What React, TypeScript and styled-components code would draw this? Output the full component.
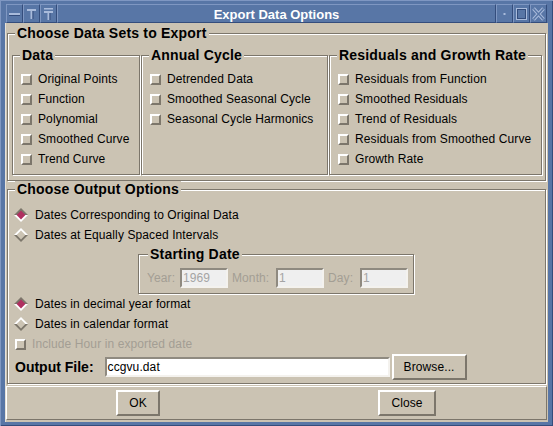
import React from "react";
import styled, { createGlobalStyle } from "styled-components";

const BG = "#cbc3b3";
const DARK = "#7c766b";
const LIGHT = "#ffffff";
const BLUE = "#5876a6";
const BLUE_LIGHT = "#7f97c2";
const BLUE_DARK = "#344d7c";
const ICON = "#a9bbdb";
const SELECT = "#b03060";
const DISABLED = "#a39e94";

const Global = createGlobalStyle`
  html, body { margin: 0; padding: 0; background: ${BLUE}; overflow: hidden; }
  * { box-sizing: border-box; }
`;

const Window = styled.div`
  width: 553px;
  height: 426px;
  background: ${BLUE};
  padding: 4px 5px 4px 5px;
  display: flex;
  flex-direction: column;
  font-family: "Liberation Sans", Arial, sans-serif;
  box-shadow: inset 1px 1px 0 ${BLUE_LIGHT}, inset -1px -1px 0 ${BLUE_DARK};
`;

const TitleBar = styled.div`
  height: 19px;
  display: flex;
  padding: 0 1px;
`;

const TitleButton = styled.div`
  width: 17px;
  flex: none;
  border-style: solid;
  border-width: 1px;
  border-color: ${BLUE_LIGHT} ${BLUE_DARK} ${BLUE_DARK} ${BLUE_LIGHT};
  display: flex;
  align-items: center;
  justify-content: center;
`;

const TitleText = styled.div`
  flex: 1;
  border-style: solid;
  border-width: 1px;
  border-color: ${BLUE_LIGHT} ${BLUE_DARK} ${BLUE_DARK} ${BLUE_LIGHT};
  color: #ffffff;
  font-weight: bold;
  font-size: 13px;
  display: flex;
  align-items: center;
  justify-content: center;
  padding-top: 1px;
`;

const Body = styled.div`
  flex: 1;
  background: ${BG};
  display: flex;
  flex-direction: column;
  padding: 2px 2px 0 2px;
  box-shadow: inset 1px 0 0 #e6e1d8;
`;

const Group = styled.fieldset<{ $pad: string; $width?: number; $ml?: number; $mt?: number }>`
  margin: ${(p) => p.$mt ?? 0}px 0 0 ${(p) => p.$ml ?? 0}px;
  min-width: 0;
  ${(p) => (p.$width ? `width: ${p.$width}px;` : "")}
  border: 1px solid ${DARK};
  box-shadow: inset 1px 1px 0 ${LIGHT}, 1px 1px 0 ${LIGHT};
  padding: ${(p) => p.$pad};
`;

const Legend = styled.legend<{ $ml?: number }>`
  font-size: 14px;
  font-weight: bold;
  line-height: 16px;
  letter-spacing: 0.2px;
  padding: 0 2px;
  margin-left: ${(p) => p.$ml ?? 3}px;
  background: ${BG};
  color: #000;
`;

const Columns = styled.div`
  display: grid;
  grid-template-columns: 128px 187px 213px;
  column-gap: 1px;
`;

const Row = styled.div<{ $indent: number; $disabled?: boolean }>`
  height: 20px;
  display: flex;
  align-items: center;
  padding-left: ${(p) => p.$indent}px;
  font-size: 12px;
  letter-spacing: 0.1px;
  color: ${(p) => (p.$disabled ? DISABLED : "#000")};
  white-space: nowrap;
`;

const Box = styled.span`
  width: 11px;
  height: 11px;
  flex: none;
  border-style: solid;
  border-width: 2px;
  border-color: ${LIGHT} ${DARK} ${DARK} ${LIGHT};
  background: ${BG};
  margin-right: 6px;
`;

const Diamond = styled.svg`
  flex: none;
  margin-right: 7px;
`;

const DateGrid = styled.div`
  display: grid;
  grid-template-columns: 37px 48px 48px 48px 36px 48px;
  align-items: center;
  height: 20px;
`;

const FieldLabel = styled.span`
  font-size: 12px;
  letter-spacing: 0.1px;
  color: ${DISABLED};
  padding-left: 4px;
`;

const Entry = styled.div<{ $width: number; $disabled?: boolean }>`
  width: ${(p) => p.$width}px;
  height: 20px;
  border-style: solid;
  border-width: 2px;
  border-color: #8f8a80 #f4f2ee #f4f2ee #8f8a80;
  background: ${(p) => (p.$disabled ? "#efefef" : "#ffffff")};
  color: ${(p) => (p.$disabled ? "#a4a4a4" : "#000")};
  font-size: 12px;
  letter-spacing: 0.1px;
  line-height: 16px;
  padding-left: 1px;
  white-space: nowrap;
  overflow: hidden;
`;

const OutputRow = styled.div`
  height: 26px;
  display: flex;
  align-items: center;
  padding-left: 3px;
`;

const BoldLabel = styled.span`
  font-size: 14px;
  font-weight: bold;
  margin-right: 11px;
`;

const Button = styled.div<{ $width: number }>`
  width: ${(p) => p.$width}px;
  height: 26px;
  border-style: solid;
  border-width: 2px;
  border-color: ${LIGHT} ${DARK} ${DARK} ${LIGHT};
  background: ${BG};
  font-size: 12px;
  letter-spacing: 0.1px;
  display: flex;
  align-items: center;
  justify-content: center;
  flex: none;
`;

const BrowseButton = styled(Button)`
  margin-left: 2px;
`;

const ButtonBar = styled.div`
  margin: 2px -1px 0 -1px;
  height: 34px;
  border-style: solid;
  border-width: 1px;
  border-color: ${LIGHT} ${DARK} ${DARK} ${LIGHT};
  display: grid;
  grid-template-columns: 262px 276px;
  align-items: center;
  justify-items: center;
`;

const Radio: React.FC<{ on?: boolean }> = ({ on }) => {
  const top = on ? DARK : LIGHT;
  const bottom = on ? LIGHT : DARK;
  return (
    <Diamond width="14" height="14" viewBox="0 0 14 14">
      <polygon points="0,7 7,0 14,7" fill={top} />
      <polygon points="0,7 7,14 14,7" fill={bottom} />
      <polygon points="2.6,7 7,2.6 11.4,7 7,11.4" fill={on ? SELECT : BG} />
    </Diamond>
  );
};

const Check: React.FC<{ label: string; indent: number; disabled?: boolean }> = ({
  label,
  indent,
  disabled,
}) => (
  <Row $indent={indent} $disabled={disabled}>
    <Box />
    {label}
  </Row>
);

const RadioRow: React.FC<{ label: string; on?: boolean }> = ({ label, on }) => (
  <Row $indent={2}>
    <Radio on={on} />
    {label}
  </Row>
);

const SubGroup: React.FC<{ title: string; items: string[] }> = ({ title, items }) => (
  <Group $pad="6px 4px 5px 4px">
    <Legend>{title}</Legend>
    {items.map((it) => (
      <Check key={it} label={it} indent={4} />
    ))}
  </Group>
);

const IconMinus = () => (
  <svg width="15" height="17" viewBox="0 0 15 17">
    <rect x="2" y="8" width="11" height="2" fill={ICON} />
    <rect x="2" y="10" width="11" height="1" fill={BLUE_DARK} />
  </svg>
);

const IconT = () => (
  <svg width="15" height="17" viewBox="0 0 15 17">
    <rect x="3" y="4" width="9" height="2" fill={ICON} />
    <rect x="6.5" y="4" width="2" height="10" fill={ICON} />
    <rect x="8.5" y="6" width="1" height="8" fill={BLUE_DARK} />
  </svg>
);

const IconTT = () => (
  <svg width="15" height="17" viewBox="0 0 15 17">
    <rect x="3" y="3" width="9" height="1.5" fill={ICON} />
    <rect x="3" y="6" width="9" height="2" fill={ICON} />
    <rect x="6.5" y="6" width="2" height="9" fill={ICON} />
    <rect x="8.5" y="8" width="1" height="7" fill={BLUE_DARK} />
  </svg>
);

const IconDot = () => (
  <svg width="15" height="17" viewBox="0 0 15 17">
    <rect x="6.5" y="8" width="2" height="2" fill={ICON} />
  </svg>
);

const IconSquare = () => (
  <svg width="15" height="17" viewBox="0 0 15 17">
    <rect x="2.5" y="3.5" width="10" height="11" fill="none" stroke={ICON} strokeWidth="1" />
    <rect x="3.5" y="4.5" width="8" height="9" fill="none" stroke={BLUE_DARK} strokeWidth="1" />
  </svg>
);

const IconX = () => (
  <svg width="15" height="17" viewBox="0 0 15 17">
    <path d="M2.5 3.5 L12.5 14.5 M12.5 3.5 L2.5 14.5" stroke={ICON} strokeWidth="3.5" />
    <path d="M2.5 3.5 L12.5 14.5 M12.5 3.5 L2.5 14.5" stroke={BLUE} strokeWidth="1.5" />
  </svg>
);

export default function App() {
  return (
    <>
      <Global />
      <Window>
        <TitleBar>
          <TitleButton>
            <IconMinus />
          </TitleButton>
          <TitleButton>
            <IconT />
          </TitleButton>
          <TitleButton>
            <IconTT />
          </TitleButton>
          <TitleText>Export Data Options</TitleText>
          <TitleButton>
            <IconDot />
          </TitleButton>
          <TitleButton>
            <IconSquare />
          </TitleButton>
          <TitleButton>
            <IconX />
          </TitleButton>
        </TitleBar>
        <Body>
          <Group $pad="6px 4px 5px 4px">
            <Legend>Choose Data Sets to Export</Legend>
            <Columns>
              <SubGroup
                title="Data"
                items={["Original Points", "Function", "Polynomial", "Smoothed Curve", "Trend Curve"]}
              />
              <SubGroup
                title="Annual Cycle"
                items={["Detrended Data", "Smoothed Seasonal Cycle", "Seasonal Cycle Harmonics"]}
              />
              <SubGroup
                title="Residuals and Growth Rate"
                items={[
                  "Residuals from Function",
                  "Smoothed Residuals",
                  "Trend of Residuals",
                  "Residuals from Smoothed Curve",
                  "Growth Rate",
                ]}
              />
            </Columns>
          </Group>
          <Group $pad="8px 4px 3px 4px">
            <Legend>Choose Output Options</Legend>
            <RadioRow label="Dates Corresponding to Original Data" on />
            <RadioRow label="Dates at Equally Spaced Intervals" />
            <Group $pad="6px 5px 5px 4px" $width={276} $ml={126} $mt={1}>
              <Legend $ml={5}>Starting Date</Legend>
              <DateGrid>
                <FieldLabel>Year:</FieldLabel>
                <Entry $width={48} $disabled>
                  1969
                </Entry>
                <FieldLabel>Month:</FieldLabel>
                <Entry $width={48} $disabled>
                  1
                </Entry>
                <FieldLabel>Day:</FieldLabel>
                <Entry $width={48} $disabled>
                  1
                </Entry>
              </DateGrid>
            </Group>
            <RadioRow label="Dates in decimal year format" on />
            <RadioRow label="Dates in calendar format" />
            <Check label="Include Hour in exported date" indent={3} disabled />
            <OutputRow>
              <BoldLabel>Output File:</BoldLabel>
              <Entry $width={285}>ccgvu.dat</Entry>
              <BrowseButton $width={75}>Browse...</BrowseButton>
            </OutputRow>
          </Group>
          <ButtonBar>
            <Button $width={44}>OK</Button>
            <Button $width={58}>Close</Button>
          </ButtonBar>
        </Body>
      </Window>
    </>
  );
}
